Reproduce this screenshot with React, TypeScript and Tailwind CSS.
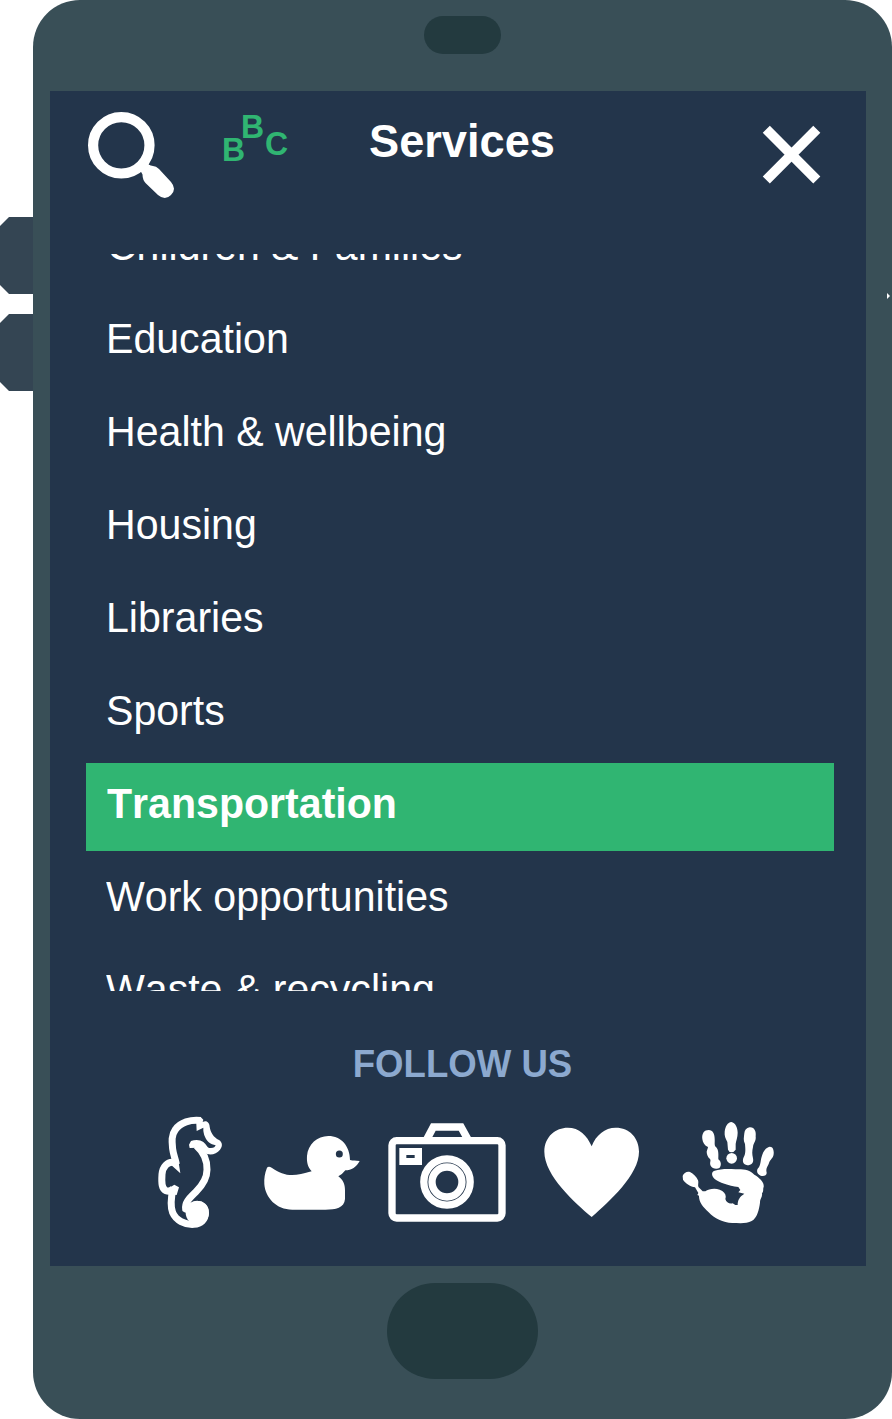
import React from "react";

const services = [
  "Children & Families",
  "Education",
  "Health & wellbeing",
  "Housing",
  "Libraries",
  "Sports",
  "Transportation",
  "Work opportunities",
  "Waste & recycling",
];

function SearchIcon() {
  return (
    <svg width="90" height="90" viewBox="0 0 90 90" className="block">
      <circle cx="35.3" cy="35.3" r="28.2" fill="none" stroke="white" strokeWidth="10.2" />
      <path fill="white" d="M53 60 Q55.5 61.500 56.500 64.500 Q56.500 70 60 73.500 L72 85 Q79 91 85 85 Q91 79 85 72 L73 59 Q70 56 67 56 Q62 55.500 61 52 Z" />
    </svg>
  );
}

function CloseIcon() {
  return (
    <svg width="60" height="60" viewBox="0 0 60 60" className="block">
      <path d="M4.300 4.300 54.800 55M54.800 4.300 4.300 55" stroke="white" strokeWidth="10" />
    </svg>
  );
}

function Seahorse() {
  return (
    <svg width="110" height="135" viewBox="0 0 330 405" className="block shrink-0">
      <g fill="none" stroke="white" strokeWidth="21">
        <path d="M152 46.500 C122 43 91 52 76 74 C63 92 66 112 68 132 C70 149 76 162 79 178" />
        <path d="M70 172 C53 170 38 184 36 208 C34 237 36 252 48 257 C56 260 64 258 70 250" />
        <path d="M69 251 C63 278 61 305 68 323 C78 346 104 360 132 358 C153 357 166 344 166 324 C166 305 154 298 143 298 C124 297 115 318 107 312 C104 291 120 278 138 260 C158 240 171 219 171 194 C172 164 158 139 139 122" />
      </g>
      <path fill="white" d="M138 36 L152 36 L160 44 L158 51 C170 44 179 54 179 65 C182 83 190 96 207 105 C217 111 219 124 210 134 C201 146 185 151 172 147 C160 143 153 133 148 128 L119 129 L117 119 L123 108 C136 103 151 104 160 111 C169 118 172 131 183 129 C192 129 195 126 197 121 L186 118 C170 110 162 94 160 77 L160 68 L140 78 Z" />
      <path fill="white" d="M61 162 L68 163 L84 160 L91 205 L66 182 Z M57 249 L73 239 L87 247 L80 270 L58 268 Z" />
      <circle cx="142" cy="323" r="35" fill="white" />
    </svg>
  );
}

function Duck() {
  return (
    <svg width="130" height="120" viewBox="0 0 390 360" className="block shrink-0">
      <path fill="white" d="M36 173 Q41 168 50 173 C88 199 114 201 170 184 C157 170 155 155 156 138 C159 103 187 78 220 78 C259 78 285 109 285 150 C295 153 301 151 314 153 C305 171 289 181 271 181 Q263 192 250 199 C265 211 270 223 270 240 L270 267 C268 294 242 299 211 299 L112 299 C63 299 31 263 28 223 Q26 198 36 173Z" />
      <circle cx="253" cy="132" r="10.500" fill="#23354b" />
    </svg>
  );
}

function Camera() {
  return (
    <svg width="140" height="120" viewBox="0 0 420 360" className="block shrink-0">
      <g fill="none" stroke="white">
        <rect x="36" y="92" width="330" height="232" rx="14" strokeWidth="22" />
        <path d="M141 87 L160 51 L243 51 L263 87" strokeWidth="23" />
        <circle cx="201" cy="216" r="69.500" strokeWidth="22" />
        <circle cx="201" cy="216" r="45" strokeWidth="22" />
      </g>
      <path fill="white" fillRule="evenodd" d="M58 114H126V165H58Z M79 135V144H104V135Z" />
    </svg>
  );
}

function Heart() {
  return (
    <svg width="115" height="120" viewBox="0 0 345 360" className="block shrink-0">
      <path fill="white" d="M170 321 C120 278 28 197 28 125 C28 79 63 53 98 53 C133 53 156 76 170 109 C182 76 210 53 242 53 C284 53 312 84 312 125 C312 194 225 272 170 321Z" />
    </svg>
  );
}

function Hand() {
  return (
    <svg width="110" height="125" viewBox="0 0 330 375" className="block shrink-0">
      <g fill="white">
        <path d="M101 60 C114 60 119 73 119 86 C120 99 117 106 123 111 C132 119 130 137 130 148 C137 153 141 164 134 173 C126 179 111 176 107 167 C103 157 109 152 105 147 C98 141 95 132 95 125 C97 118 99 113 99 111 C89 107 83 98 82 87 C80 70 88 60 101 60Z" />
        <path d="M169 36 C181 38 188 53 188 68 C188 83 183 91 182 102 L182 119 Q176 127 170 127 Q162 127 159 119 L157 96 C151 84 148 77 149 65 C151 49 158 37 169 36Z" />
        <ellipse cx="170" cy="145" rx="16" ry="16" />
        <path d="M224 52 C239 51 244 66 242 79 C244 94 235 99 234 111 C231 124 231 132 234 145 C237 159 229 166 217 166 C204 164 201 153 206 142 C213 130 211 116 210 102 C204 92 207 81 208 70 C209 60 214 54 224 52Z" />
        <path d="M284 110 C296 109 298 126 295 137 C291 147 284 150 281 162 C276 172 272 177 275 188 C276 197 266 199 257 197 C247 194 243 183 249 175 C258 166 256 151 260 140 C264 126 271 113 284 110Z" />
        <path d="M23 198 C26 189 36 183 45 186 C55 191 65 200 69 211 C72 219 67 226 71 232 L83 244 L91 244 C100 237 119 233 134 239 C149 245 155 254 151 267 C154 277 163 283 173 280 L181 285 L188 285 C188 270 194 260 208 251 L190 247 L196 240 L190 231 C160 227 132 217 119 207 C109 198 108 185 119 182 C137 176 161 176 181 178 C205 177 224 179 238 194 C253 203 268 216 266 231 C263 237 267 244 261 250 C263 262 254 267 255 278 C252 299 247 323 230 333 C215 342 192 339 172 339 C144 339 118 325 101 307 C83 291 71 275 72 257 L67 255 L70 249 L60 232 C47 230 32 221 24 209Z" />
      </g>
    </svg>
  );
}

function Service({ name }: { name: string }) {
  let row = "h-[88px] whitespace-nowrap pl-5 text-[41.1px] leading-[83px]";
  if (name === "Transportation") {
    row = "h-[88px] whitespace-nowrap bg-[#30b572] pl-[21px] text-[41.1px] font-bold leading-[83px]";
  } else if (name === "Children & Families") {
    row = "h-[88px] whitespace-nowrap pl-[21px] text-[41px] leading-[83px]";
  }
  return (
    <li className={row}>
      <span className="inline-block origin-[0_55px] scale-y-[1.04]">{name}</span>
    </li>
  );
}

export default function App() {
  return (
    <div className="relative flex h-[1419px] w-[892px] overflow-hidden bg-white font-['Liberation_Sans',Arial,sans-serif] text-white">
      <div className="flex w-[33px] shrink-0 flex-col gap-5 pt-[217px]">
        <div className="h-[77px] bg-[#344553] [clip-path:polygon(9px_0,100%_0,100%_100%,9px_100%,0_68px,0_9px)]" />
        <div className="h-[77px] bg-[#344553] [clip-path:polygon(9px_0,100%_0,100%_100%,9px_100%,0_68px,0_9px)]" />
      </div>
      <div className="flex w-[859px] flex-col rounded-[47px] bg-[#394f57] pl-[17px] pr-[26px]">
        <div className="flex h-[91px] shrink-0 justify-center pl-[9px] pt-4">
          <div className="h-[38px] w-[77px] rounded-full bg-[#233a3f]" />
        </div>
        <main className="flex h-[1175px] shrink-0 flex-col bg-[#23354b]">
          <header className="flex h-[163px] items-start pl-[36px]">
            <button aria-label="Search" className="mt-[19px]"><SearchIcon /></button>
            <div className="relative ml-[46px] mt-[17px] h-[60px] w-[70px] text-[32px] font-bold leading-[38px] text-[#30b572]">
              <span className="absolute left-0 top-[23px] origin-[0_30px] scale-y-[1.04]">B</span>
              <span className="absolute left-[19px] top-0 origin-[0_30px] scale-y-[1.04]">B</span>
              <span className="absolute left-[43px] top-[17px] origin-[0_30px] scale-y-[1.04]">C</span>
            </div>
            <h1 className="ml-[77px] mt-[25px] w-[186px] origin-[0_42px] scale-y-[1.04] whitespace-nowrap text-[45.2px] font-bold leading-[52px]">Services</h1>
            <button aria-label="Close" className="ml-[207px] mt-[34px]"><CloseIcon /></button>
          </header>
          <nav className="h-[737px] overflow-hidden pl-[36px] pr-[32px] [font-kerning:none]">
            <ul className="-mt-[49px] flex flex-col gap-[5px]">
              {services.map((name) => (
                <Service key={name} name={name} />
              ))}
            </ul>
          </nav>
          <footer className="flex flex-col">
            <h2 className="mt-[53px] origin-[0_34px] scale-y-[1.06] pl-[9px] text-center text-[36.6px] font-bold leading-[42px] text-[#8ca9cf]">FOLLOW US</h2>
            <div className="mt-[19px] flex items-start pl-[100px]">
              <Seahorse />
              <div className="-ml-[5px] mt-[5px]"><Duck /></div>
              <div className="-ml-[5px] mt-[5px]"><Camera /></div>
              <div className="ml-[15px] mt-[5px]"><Heart /></div>
              <div className="ml-[25px] mt-[5px]"><Hand /></div>
            </div>
          </footer>
        </main>
        <div className="flex justify-center pl-[9px] pt-[17px]">
          <div className="h-24 w-[151px] rounded-full bg-[#233a3f]" />
        </div>
      </div>
      <svg className="absolute left-[887px] top-[293px]" width="3" height="6" viewBox="0 0 3 6">
        <path d="M0 0 3 3 0 6Z" fill="white" />
      </svg>
    </div>
  );
}
